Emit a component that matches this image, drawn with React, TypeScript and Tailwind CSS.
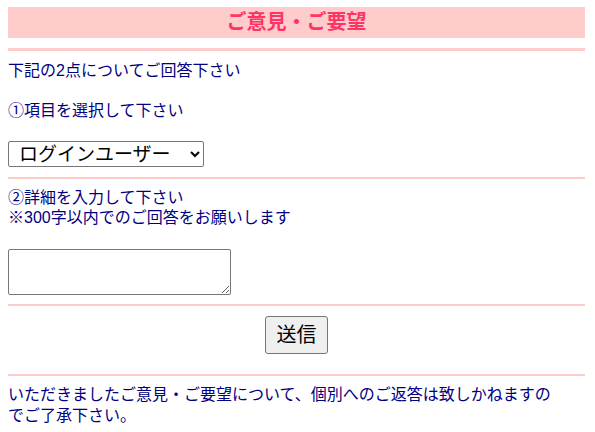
import { useState } from 'react';

export default function App() {
  const [item, setItem] = useState('login');

  return (
    <div className="min-h-[432px] bg-white pl-2 pr-[10px] pt-[7px] pb-2 font-['Liberation_Sans','Noto_Sans_CJK_JP',sans-serif] text-[16px] leading-[20px] text-[#000080]">
      {/* タイトル */}
      <h1 className="h-[31px] bg-[#ffcccc] text-center text-[20px] leading-[31px] font-bold text-[#ff3366]">
        ご意見・ご要望
      </h1>
      <div className="mt-[10px] h-[3px] bg-[#ffcccc]" />

      {/* 項目選択 */}
      <p className="mt-[10px]">下記の2点についてご回答下さい</p>
      <p className="mt-[20px]">①項目を選択して下さい</p>
      <div className="mt-[20px]">
        <select
          value={item}
          onChange={(e) => setItem(e.target.value)}
          className="h-[26px] w-[196px] rounded-[2px] border border-[#767676] bg-white pl-[6px] text-[19px] leading-[24px] text-black"
        >
          <option value="login">ログインユーザー</option>
          <option value="guest">ゲストユーザー</option>
        </select>
      </div>
      <div className="mt-[10px] h-[2px] bg-[#ffcccc]" />

      {/* 詳細入力 */}
      <p className="mt-[9px]">
        ②詳細を入力して下さい
        <br />
        ※300字以内でのご回答をお願いします
      </p>
      <div className="mt-[21px] flex">
        <textarea className="h-[46px] w-[223px] rounded-[2px] border border-[#767676] bg-white text-[13px] text-black" />
      </div>
      <div className="mt-[9px] h-[2px] bg-[#ffcccc]" />

      {/* 送信 */}
      <div className="mt-[10px] flex justify-center">
        <button className="h-[38px] w-[63px] rounded-[3px] border border-[#767676] bg-[#efefef] text-[20px] text-black">
          送信
        </button>
      </div>
      <div className="mt-[20px] h-[2px] bg-[#ffcccc]" />

      {/* 注意書き */}
      <p className="mt-[8px] leading-[21px]">
        いただきましたご意見・ご要望について、個別へのご返答は致しかねますの
        <br />
        でご了承下さい。
      </p>
    </div>
  );
}
